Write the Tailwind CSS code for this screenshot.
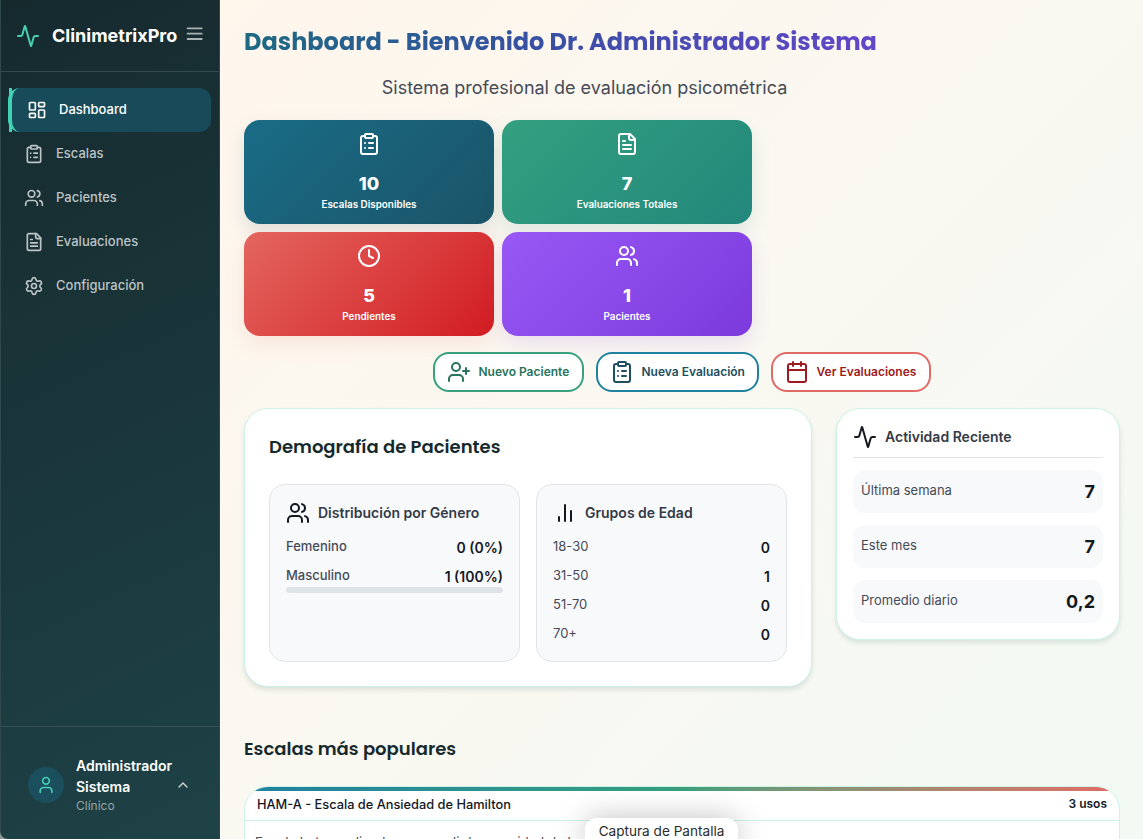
<!DOCTYPE html>
<html lang="es">
<head>
<meta charset="utf-8">
<title>ClinimetrixPro</title>
<script src="https://cdn.jsdelivr.net/npm/@tailwindcss/browser@4"></script>
</head>
<body class="h-[839px] w-[1143px] overflow-hidden bg-[#8b9a9c] font-['Inter','Liberation_Sans',sans-serif] text-[#14181f]">
<svg class="hidden">
  <defs>
    <symbol id="activity" viewBox="0 0 24 24"><path d="M22 12h-2.48a2 2 0 0 0-1.93 1.46l-2.35 8.36a.25.25 0 0 1-.48 0L9.24 2.18a.25.25 0 0 0-.48 0l-2.35 8.36A2 2 0 0 1 4.49 12H2"/></symbol>
    <symbol id="menu" viewBox="0 0 24 24"><path d="M4 6h16M4 12h16M4 18h16"/></symbol>
    <symbol id="dashboard" viewBox="0 0 24 24"><rect width="7" height="9" x="3" y="3" rx="1"/><rect width="7" height="5" x="14" y="3" rx="1"/><rect width="7" height="9" x="14" y="12" rx="1"/><rect width="7" height="5" x="3" y="16" rx="1"/></symbol>
    <symbol id="clipboard" viewBox="0 0 24 24"><rect width="8" height="4" x="8" y="2" rx="1"/><path d="M16 4h2a2 2 0 0 1 2 2v14a2 2 0 0 1-2 2H6a2 2 0 0 1-2-2V6a2 2 0 0 1 2-2h2M12 11h4M12 16h4M8 11h.01M8 16h.01"/></symbol>
    <symbol id="users" viewBox="0 0 24 24"><path d="M16 21v-2a4 4 0 0 0-4-4H6a4 4 0 0 0-4 4v2"/><circle cx="9" cy="7" r="4"/><path d="M22 21v-2a4 4 0 0 0-3-3.87M16 3.13a4 4 0 0 1 0 7.75"/></symbol>
    <symbol id="file" viewBox="0 0 24 24"><path d="M15 2H6a2 2 0 0 0-2 2v16a2 2 0 0 0 2 2h12a2 2 0 0 0 2-2V7Z"/><path d="M14 2v4a2 2 0 0 0 2 2h4M10 9H8M16 13H8M16 17H8"/></symbol>
    <symbol id="settings" viewBox="0 0 24 24"><path d="M9.671 4.136a2.34 2.34 0 0 1 4.659 0 2.34 2.34 0 0 0 3.319 1.915 2.34 2.34 0 0 1 2.33 4.033 2.34 2.34 0 0 0 0 3.831 2.34 2.34 0 0 1-2.33 4.033 2.34 2.34 0 0 0-3.319 1.915 2.34 2.34 0 0 1-4.659 0 2.34 2.34 0 0 0-3.32-1.915 2.34 2.34 0 0 1-2.33-4.033 2.34 2.34 0 0 0 0-3.831A2.34 2.34 0 0 1 6.35 6.051a2.34 2.34 0 0 0 3.319-1.915"/><circle cx="12" cy="12" r="3"/></symbol>
    <symbol id="user" viewBox="0 0 24 24"><path d="M19 21v-2a4 4 0 0 0-4-4H9a4 4 0 0 0-4 4v2"/><circle cx="12" cy="7" r="4"/></symbol>
    <symbol id="chevron-up" viewBox="0 0 24 24"><path d="m18 15-6-6-6 6"/></symbol>
    <symbol id="clock" viewBox="0 0 24 24"><circle cx="12" cy="12" r="10"/><path d="M12 6v6l4 2"/></symbol>
    <symbol id="user-plus" viewBox="0 0 24 24"><path d="M16 21v-2a4 4 0 0 0-4-4H6a4 4 0 0 0-4 4v2"/><circle cx="9" cy="7" r="4"/><path d="M19 8v6M22 11h-6"/></symbol>
    <symbol id="calendar" viewBox="0 0 24 24"><path d="M8 2v4M16 2v4M3 10h18"/><rect width="18" height="18" x="3" y="4" rx="2"/></symbol>
    <symbol id="bars" viewBox="0 0 24 24"><path d="M18 20V10M12 20V4M6 20v-4"/></symbol>
  </defs>
</svg>
<div class="flex h-[839px] overflow-hidden rounded-bl-lg fill-none [stroke-linecap:round] [stroke-linejoin:round] stroke-2">
  <aside class="flex w-[220px] shrink-0 flex-col border-x border-[#2f484c] bg-linear-[155deg,#162a2e,#1e4246]">
    <div class="flex h-[72px] items-center border-b border-[#324a4e] pl-[15px]">
      <svg class="size-6 stroke-[#45d0b4]"><use href="#activity"/></svg>
      <span class="ml-3 w-[126px] text-lg font-bold whitespace-nowrap text-white">ClinimetrixPro</span>
      <svg class="mb-[3px] ml-[6px] size-[21.33px] stroke-[#a9b3b5]"><use href="#menu"/></svg>
    </div>
    <nav class="flex-1 pt-4 pl-[7px] text-[13px] leading-5 font-medium text-[#bcc4c6]">
      <a class="relative flex h-11 w-[203px] items-center rounded-[12px] border-l-4 border-[#40d3b3] bg-linear-to-br from-[#184b5a] to-[#184a59] pl-[15px] text-white"><i class="absolute inset-y-0 -left-[3px] w-[3px] bg-[#40d3b3]"></i><svg class="size-5"><use href="#dashboard" class="stroke-white"/></svg><span class="mb-0.5 ml-3">Dashboard</span></a>
      <a class="flex h-11 items-center pl-4"><svg class="size-5 stroke-current"><use href="#clipboard"/></svg><span class="mb-0.5 ml-3">Escalas</span></a>
      <a class="flex h-11 items-center pl-4"><svg class="size-5 stroke-current"><use href="#users"/></svg><span class="mb-0.5 ml-3">Pacientes</span></a>
      <a class="flex h-11 items-center pl-4"><svg class="size-5 stroke-current"><use href="#file"/></svg><span class="mb-0.5 ml-3">Evaluaciones</span></a>
      <a class="flex h-11 items-center pl-4"><svg class="size-5 stroke-current"><use href="#settings"/></svg><span class="mb-0.5 ml-3">Configuración</span></a>
    </nav>
    <div class="flex h-[113px] items-center border-t border-[#345054] pt-[4px] pl-[27px]">
      <div class="flex size-9 items-center justify-center rounded-full bg-[#1b4f5e]"><svg class="size-5 stroke-[#45d0b4]"><use href="#user"/></svg></div>
      <div class="ml-3 w-[99px]">
        <div class="text-sm leading-[21px] font-semibold text-white">Administrador Sistema</div>
        <div class="text-xs leading-[18px] text-[#98a6a8]">Clínico</div>
      </div>
      <svg class="size-4 stroke-[#d0d8d9]"><use href="#chevron-up"/></svg>
    </div>
  </aside>

  <main class="h-[839px] flex-1 overflow-hidden bg-linear-[135deg,#fff6ec,#faf8f1_45%,#f2faf3] pr-[23px] pl-6">
    <h1 class="mt-6 h-9 w-fit bg-linear-[135deg,#1c6b80,#3a4fa5_50%,#6545cb] bg-clip-text font-['Poppins','Inter',sans-serif] text-2xl leading-9 font-bold whitespace-nowrap text-transparent">Dashboard - Bienvenido Dr. Administrador Sistema</h1>
    <p class="mt-[14px] w-[681px] text-center text-lg leading-[27px] text-[#454b57]">Sistema profesional de evaluación psicométrica</p>

    <section class="mt-[19px] grid w-[508px] grid-cols-2 gap-2 text-center text-white">
      <div class="flex h-[104px] flex-col items-center rounded-2xl bg-linear-[135deg,#196c86,#1b5468] pt-3 shadow-[0_8px_20px_#1b546822]"><svg class="size-6 stroke-white"><use href="#clipboard"/></svg><b class="mt-[14px] text-lg leading-[27px] font-extrabold">10</b><span class="-mt-px text-[9.9px] leading-4 font-semibold">Escalas Disponibles</span></div>
      <div class="flex h-[104px] flex-col items-center rounded-2xl bg-linear-[135deg,#34a080,#22877b] pt-3 shadow-[0_8px_20px_#22877b22]"><svg class="size-6 stroke-white"><use href="#file"/></svg><b class="mt-[14px] text-lg leading-[27px] font-extrabold">7</b><span class="-mt-px text-[9.9px] leading-4 font-semibold">Evaluaciones Totales</span></div>
      <div class="flex h-[104px] flex-col items-center rounded-2xl bg-linear-[135deg,#e4665f,#d21c22] pt-3 shadow-[0_8px_20px_#e4665f22]"><svg class="size-6 stroke-white"><use href="#clock"/></svg><b class="mt-[14px] text-lg leading-[27px] font-extrabold">5</b><span class="-mt-px text-[9.9px] leading-4 font-semibold">Pendientes</span></div>
      <div class="flex h-[104px] flex-col items-center rounded-2xl bg-linear-[135deg,#9858f5,#7c3add] pt-3 shadow-[0_8px_20px_#7c3add22]"><svg class="size-6 stroke-white"><use href="#users"/></svg><b class="mt-[14px] text-lg leading-[27px] font-extrabold">1</b><span class="-mt-px text-[9.9px] leading-4 font-semibold">Pacientes</span></div>
    </section>

    <div class="mt-4 mr-px flex h-10 justify-center gap-3 text-xs font-semibold whitespace-nowrap">
      <button class="flex w-[151px] items-center rounded-2xl border-2 border-[#38a07c] bg-white pl-3 text-[#28735c]"><svg class="size-6 stroke-current"><use href="#user-plus"/></svg><span class="ml-2">Nuevo Paciente</span></button>
      <button class="flex w-[163px] items-center rounded-2xl border-2 border-[#1f82a0] bg-white pl-3 text-[#1d4f60]"><svg class="size-6 stroke-current"><use href="#clipboard"/></svg><span class="ml-2">Nueva Evaluación</span></button>
      <button class="flex w-[160px] items-center rounded-2xl border-2 border-[#e06a66] bg-white pl-3 text-[#9c1a20]"><svg class="size-6 stroke-current"><use href="#calendar"/></svg><span class="ml-2">Ver Evaluaciones</span></button>
    </div>

    <div class="mt-4 flex items-start gap-6">
      <section class="h-[279px] w-[568px] rounded-3xl border border-[#cdf3e8] bg-white px-6 pt-6 shadow-[0_3px_5px_#0f3d3a1f]">
        <h2 class="font-['Poppins','Inter',sans-serif] text-lg leading-7 font-semibold text-[#162a2e]">Demografía de Pacientes</h2>
        <div class="mt-[23px] grid grid-cols-[251px_251px] gap-4 text-sm">
          <div class="h-[178px] rounded-2xl border border-[#e1e4e8] bg-[#f8f9fb] px-4 pt-4">
            <div class="flex h-6 items-center font-semibold text-[#343a46]"><svg class="size-6 stroke-[#14181f]"><use href="#users"/></svg><span class="ml-2">Distribución por Género</span></div>
            <div class="mt-2 flex h-[29px] justify-between text-[13px]"><span class="pt-1 font-[450] text-[#454b57]">Femenino</span><span class="pt-[5px] text-sm font-semibold">0 (0%)</span></div>
            <div class="flex h-[25px] justify-between text-[13px]"><span class="pt-1 font-[450] text-[#454b57]">Masculino</span><span class="pt-[5px] text-sm font-semibold">1 (100%)</span></div>
            <div class="h-1.5 rounded-full bg-[#dfe2e6]"></div>
          </div>
          <div class="h-[178px] rounded-2xl border border-[#e1e4e8] bg-[#f8f9fb] px-4 pt-4">
            <div class="flex h-6 items-center font-semibold text-[#343a46]"><svg class="size-6 stroke-[#14181f]"><use href="#bars"/></svg><span class="ml-2">Grupos de Edad</span></div>
            <div class="mt-2 flex h-[29px] justify-between text-[13px]"><span class="pt-1 text-[#454b57]">18-30</span><span class="pt-[5px] text-sm font-semibold">0</span></div>
            <div class="flex h-[29px] justify-between text-[13px]"><span class="pt-1 text-[#454b57]">31-50</span><span class="pt-[5px] text-sm font-semibold">1</span></div>
            <div class="flex h-[29px] justify-between text-[13px]"><span class="pt-1 text-[#454b57]">51-70</span><span class="pt-[5px] text-sm font-semibold">0</span></div>
            <div class="flex h-[29px] justify-between text-[13px]"><span class="pt-1 text-[#454b57]">70+</span><span class="pt-[5px] text-sm font-semibold">0</span></div>
          </div>
        </div>
      </section>
      <section class="h-[232px] w-[284px] rounded-3xl border border-[#cdf3e8] bg-white px-4 pt-4 shadow-[0_3px_5px_#0f3d3a1f]">
        <div class="flex h-[33px] border-b border-[#dfe2e6] text-sm leading-6 font-semibold text-[#343a46]"><svg class="size-6 stroke-[#14181f]"><use href="#activity"/></svg><span class="ml-2">Actividad Reciente</span></div>
        <div class="mt-3 grid gap-3 text-[13px] text-[#454b57]">
          <div class="flex h-[43px] justify-between rounded-xl bg-[#f8f9fb] px-2 pt-2 leading-6"><span>Última semana</span><b class="text-lg leading-[27px] text-[#14181f]">7</b></div>
          <div class="flex h-[43px] justify-between rounded-xl bg-[#f8f9fb] px-2 pt-2 leading-6"><span>Este mes</span><b class="text-lg leading-[27px] text-[#14181f]">7</b></div>
          <div class="flex h-[43px] justify-between rounded-xl bg-[#f8f9fb] px-2 pt-2 leading-6"><span>Promedio diario</span><b class="text-lg leading-[27px] text-[#14181f]">0,2</b></div>
        </div>
      </section>
    </div>

    <h2 class="mt-12 font-['Poppins','Inter',sans-serif] text-lg leading-7 font-semibold text-[#162a2e]">Escalas más populares</h2>
    <section class="mt-[23px] h-[160px] overflow-hidden rounded-3xl border border-[#cdf3e8] bg-white">
      <div class="h-1 bg-linear-to-r from-[#1f82a0] via-[#38a07c] to-[#e06a66]"></div>
      <div class="flex h-[30px] items-start justify-between border-b border-[#cdf3e8] px-3"><span class="text-[12.8px] leading-[27px] font-medium">HAM-A - Escala de Ansiedad de Hamilton</span><span class="text-xs leading-[26px] font-semibold">3 usos</span></div>
      <p class="pt-[11px] pl-[10px] text-[13.3px] leading-5 text-[#454b57]">Escala heteroaplicada para medir la severidad de la</p>
    </section>
  </main>
  <div class="absolute top-[818px] left-[585px] h-8 w-[153px] rounded-[12px] bg-white/95 text-center text-[13.6px] leading-[26px] text-[#2b2b2b] shadow-[0_0_30px_#00000040]">Captura de Pantalla</div>
</div>
</body>
</html>
